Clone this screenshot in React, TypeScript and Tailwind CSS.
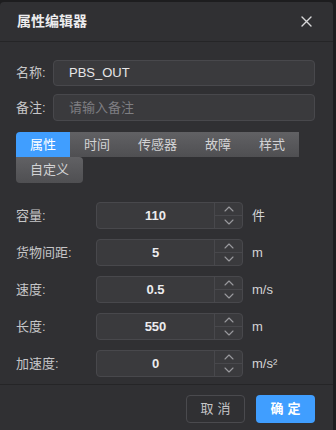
import * as React from "react"

const font = { fontFamily: '"Liberation Sans", "Noto Sans CJK SC", sans-serif' }

const tabs = ["属性", "时间", "传感器", "故障", "样式"]

const fields = [
  { label: "容量:", value: "110", unit: "件" },
  { label: "货物间距:", value: "5", unit: "m" },
  { label: "速度:", value: "0.5", unit: "m/s" },
  { label: "长度:", value: "550", unit: "m" },
  { label: "加速度:", value: "0", unit: "m/s²" },
]

function Chevron({ up }: { up?: boolean }) {
  return (
    <svg width="10" height="6" viewBox="0 0 10 6" fill="none">
      <path
        d={up ? "M1 5L5 1L9 5" : "M1 1L5 5L9 1"}
        stroke="#9a9a9e"
        strokeWidth="1.1"
        strokeLinecap="round"
        strokeLinejoin="round"
      />
    </svg>
  )
}

function NumberField({ label, value, unit }: { label: string; value: string; unit: string }) {
  return (
    <div className="flex items-center h-[27px]">
      <label className="w-[80px] text-[13px] text-[#c6c6c8]">{label}</label>
      <div className="flex h-[27px] w-[147px] rounded-[4px] border border-[#48484c] bg-[#3a3a3d]">
        <div className="flex-1 flex items-center justify-center text-[13px] font-bold text-[#ececee]">{value}</div>
        <div className="w-[28px] flex flex-col border-l border-[#48484c]">
          <div className="flex-1 flex items-center justify-center border-b border-[#48484c]">
            <Chevron up />
          </div>
          <div className="flex-1 flex items-center justify-center">
            <Chevron />
          </div>
        </div>
      </div>
      <span className="ml-[9px] text-[13px] text-[#d4d4d6]">{unit}</span>
    </div>
  )
}

export default function App() {
  const [activeTab, setActiveTab] = React.useState("属性")

  return (
    <div className="w-[336px] h-[430px] bg-[#1d1d1f] overflow-hidden pt-[2px]" style={font}>
      <div className="w-[333px] h-[440px] bg-[#303033] rounded-t-[4px] flex flex-col">
        {/* Header */}
        <div className="h-[40px] flex items-center justify-between pl-[17px] pr-[21px] border-b border-[#252527]">
          <span className="text-[14px] font-bold text-[#ececee]">属性编辑器</span>
          <svg width="11" height="11" viewBox="0 0 11 11">
            <path d="M1 1L10 10M10 1L1 10" stroke="#d8d8da" strokeWidth="1.4" strokeLinecap="round" />
          </svg>
        </div>

        {/* Body */}
        <div className="pl-[16px] pr-[18px] pt-[18px] flex-1">
          <div className="flex items-center">
            <label className="w-[37px] text-[13px] text-[#c6c6c8]">名称:</label>
            <div className="flex-1 h-[26px] rounded-[4px] border border-[#48484c] bg-[#3a3a3d] flex items-center pl-[15px] text-[13px] text-[#e6e6e8]">
              PBS_OUT
            </div>
          </div>
          <div className="flex items-center mt-[8px]">
            <label className="w-[37px] text-[13px] text-[#c6c6c8]">备注:</label>
            <div className="flex-1 h-[27px] rounded-[4px] border border-[#48484c] bg-[#3a3a3d] flex items-center pl-[15px] text-[13px] text-[#7e7e82]">
              请输入备注
            </div>
          </div>

          {/* Tabs */}
          <div className="mt-[11px] flex flex-wrap w-[290px]">
            {tabs.map((t, i) => (
              <button
                key={t}
                onClick={() => setActiveTab(t)}
                className={
                  "h-[25px] px-[14px] text-[13px] " +
                  (activeTab === t
                    ? "bg-[#409eff] text-white"
                    : "bg-gradient-to-b from-[#616164] to-[#4f4f52] text-[#d2d2d4]") +
                  (i === 0 ? " rounded-tl-[4px]" : "")
                }
              >
                {t}
              </button>
            ))}
          </div>
          <div className="flex">
            <button
              onClick={() => setActiveTab("自定义")}
              className={
                "h-[26px] px-[14px] text-[13px] rounded-b-[4px] rounded-tr-[4px] " +
                (activeTab === "自定义"
                  ? "bg-[#409eff] text-white"
                  : "bg-gradient-to-b from-[#616164] to-[#4f4f52] text-[#d2d2d4]")
              }
            >
              自定义
            </button>
          </div>

          {/* Number fields */}
          <div className="mt-[19px] flex flex-col gap-[10px]">
            {fields.map(f => (
              <NumberField key={f.label} {...f} />
            ))}
          </div>
        </div>

        {/* Footer */}
        <div className="mt-[4px] border-t border-[#252527] h-[58px] flex justify-end gap-[11px] pr-[18px] pt-[10px]">
          <button className="w-[59px] h-[28px] rounded-[4px] border border-[#4a4a4e] text-[13px] text-[#c6c6c8] tracking-[4px] pl-[4px]">
            取消
          </button>
          <button className="w-[59px] h-[28px] rounded-[4px] bg-[#409eff] text-[13px] font-bold text-white tracking-[4px] pl-[4px]">
            确定
          </button>
        </div>
      </div>
    </div>
  )
}
